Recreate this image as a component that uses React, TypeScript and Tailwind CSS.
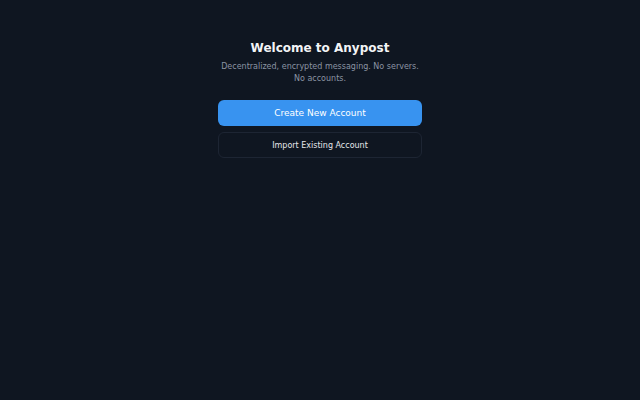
export default function App() {
    return (
        <div className="min-h-screen w-full bg-[#0f1621] flex justify-center font-['DejaVu_Sans',sans-serif]">
            <div className="w-[204px] pt-[41px] flex flex-col items-center">
                <h1 className="text-[12px] leading-[15px] font-bold text-[#f3f4f6]">Welcome to Anypost</h1>
                <p className="mt-[5px] text-[8px] leading-[12px] text-[#8b94a3] text-center w-full">
                    Decentralized, encrypted messaging. No servers. No accounts.
                </p>
                <div className="mt-[15px] w-full flex flex-col gap-[6px]">
                    <button className="w-full h-[26px] pt-[2px] rounded-[6px] bg-[#3893f0] text-white text-[9px]">
                        Create New Account
                    </button>
                    <button className="w-full h-[26px] pt-[1px] rounded-[6px] border border-[#1d2533] bg-transparent text-[#e5e7eb] text-[8px]">
                        Import Existing Account
                    </button>
                </div>
            </div>
        </div>
    );
}
